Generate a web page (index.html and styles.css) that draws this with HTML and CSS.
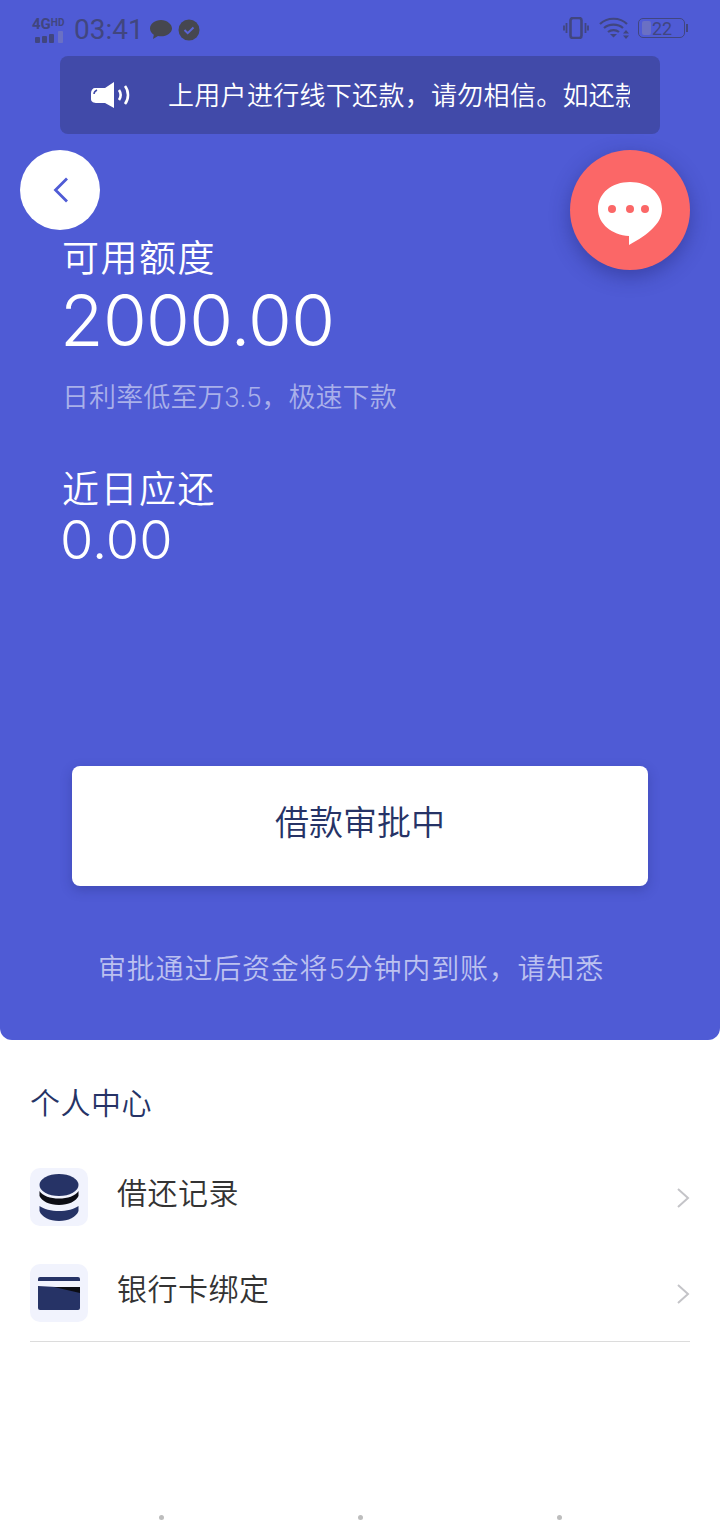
FILE: index.html
```html
<!DOCTYPE html>
<html lang="zh-CN">
<head>
  <meta charset="UTF-8" />
  <title>个人中心</title>
  <link rel="stylesheet" href="styles.css">
</head>
<body>
  <div class="hero">
    <div class="status-bar">
      <div class="status-left">
        <div class="signal">
          <span class="signal-text">4G<sup>HD</sup></span>
          <svg width="32" height="12" viewBox="0 0 32 12">
            <rect x="3" y="6" width="5" height="6" rx="1" fill="#41467f"/>
            <rect x="10" y="5" width="5" height="7" rx="1" fill="#41467f"/>
            <rect x="17" y="3" width="5" height="9" rx="1" fill="#41467f"/>
            <rect x="26" y="0" width="5" height="12" rx="1" fill="#6a70c4"/>
          </svg>
        </div>
        <span class="clock">03:41</span>
        <svg class="st-icon" width="22" height="20" viewBox="0 0 22 20">
          <path d="M11 0C5 0 0 3.700 0 8.500c0 2.600 1.500 4.800 3.800 6.300L3 19l5-3c1 .2 2 .3 3 .3 6 0 11-3.500 11-7.800S17 0 11 0z" fill="#46474f"/>
        </svg>
        <svg class="st-icon" width="22" height="22" viewBox="0 0 22 22">
          <circle cx="11" cy="11" r="10.500" fill="#46474f"/>
          <path d="M6.500 11l3.200 3.200 5.800-5.700" fill="none" stroke="#5a64d6" stroke-width="2"/>
        </svg>
      </div>
      <div class="status-right">
        <svg width="26" height="22" viewBox="0 0 26 22">
          <rect x="7.500" y="1" width="11" height="20" rx="2.500" fill="none" stroke="#41467f" stroke-width="2.600"/>
          <path d="M3.500 6v10M1 8.500v5M22.500 6v10M25 8.500v5" stroke="#41467f" stroke-width="1.800" fill="none"/>
        </svg>
        <svg width="32" height="22" viewBox="0 0 32 22">
          <path d="M1 7c7-7 20-7 27 0M5 11c5-4.500 14-4.500 19 0M9 15c3-2.500 8-2.500 11 0" fill="none" stroke="#41467f" stroke-width="2.200"/>
          <path d="M11 17h7l-3.500 3.500zM27 13l3 3.500h-6zM27 22l-3-3.500h6z" fill="#41467f"/>
        </svg>
        <div class="battery">
          <span class="battery-level"></span>
          <span class="battery-num">22</span>
        </div>
        <span class="battery-tip"></span>
      </div>
    </div>

    <div class="notice">
      <svg class="notice-icon" width="42" height="28" viewBox="0 0 42 28">
        <path d="M1 12c0-3 2-5 4-5h10L24 1v26l-9-5H7c-3 0-6-1-6-4z" fill="#fff"/>
        <path d="M4 13c0-2 1-3 3-4" fill="none" stroke="#414aa9" stroke-width="1.500"/>
        <path d="M29 9c2 3 2 7 0 10M35 5c4 5 4 13 0 18" fill="none" stroke="#fff" stroke-width="2.600"/>
      </svg>
      <div class="notice-track">
        <span class="notice-text">上用户进行线下还款，请勿相信。如还款</span>
      </div>
    </div>

    <button class="back-btn">
      <svg width="16" height="26" viewBox="0 0 16 26">
        <path d="M14 1.500L2.500 13 14 24.500" fill="none" stroke="#4f5bd5" stroke-width="2.800"/>
      </svg>
    </button>

    <div class="chat-btn">
      <svg width="66" height="64" viewBox="0 0 66 64">
        <path d="M33 0C15 0 1 11 1 27c0 15 14 26 31 27v9c9-5 19-11 25-18 5-5 8-11 8-18C65 11 51 0 33 0z" fill="#fff"/>
        <circle cx="15" cy="27" r="4" fill="#fb6767"/>
        <circle cx="33" cy="27" r="4" fill="#fb6767"/>
        <circle cx="48" cy="27" r="4" fill="#fb6767"/>
      </svg>
    </div>

    <div class="balance">
      <div class="label">可用额度</div>
      <div class="amount">2000.00</div>
      <div class="rate">日利率低至万3.5，极速下款</div>
      <div class="label label-due">近日应还</div>
      <div class="amount-small">0.00</div>
    </div>

    <div class="apply-btn">借款审批中</div>
    <div class="apply-tip">审批通过后资金将5分钟内到账，请知悉</div>
  </div>

  <div class="center">
    <div class="center-title">个人中心</div>
    <div class="menu-row">
      <div class="menu-icon">
        <svg width="40" height="47" viewBox="0 0 40 47">
          <ellipse cx="20" cy="11" rx="19.500" ry="11" fill="#263366"/>
          <path d="M.5 17c3 5 11 7.500 19.500 7.500S36.500 22 39.500 17v5c-2 5-10 9-19.500 9S2.500 27 .5 22z" fill="#0c0d14"/>
          <path d="M.5 32c4 3 12 5 19.500 5s15.500-2 19.500-5v5c-2 6-10 10-19.500 10S2.500 43 .5 37z" fill="#263366"/>
        </svg>
      </div>
      <span class="menu-name">借还记录</span>
      <svg class="arrow" width="14" height="20" viewBox="0 0 14 20">
        <path d="M2 1L12 10 2 19" fill="none" stroke="#c4c4c8" stroke-width="2"/>
      </svg>
    </div>
    <div class="menu-row">
      <div class="menu-icon">
        <svg width="42" height="33" viewBox="0 0 42 33">
          <rect x="0" y="0" width="42" height="33" rx="2" fill="#263366"/>
          <path d="M0 4h42v6H18L0 9z" fill="#f1f3fd"/>
          <path d="M16 10l26 0v6z" fill="#0c0d14"/>
        </svg>
      </div>
      <span class="menu-name">银行卡绑定</span>
      <svg class="arrow" width="14" height="20" viewBox="0 0 14 20">
        <path d="M2 1L12 10 2 19" fill="none" stroke="#c4c4c8" stroke-width="2"/>
      </svg>
    </div>
    <div class="divider"></div>
  </div>

  <div class="nav-dots">
    <span></span>
    <span></span>
    <span></span>
  </div>
</body>
</html>
```

FILE: styles.css
```css
* {
  box-sizing: border-box;
}

body {
  margin: 0;
  width: 720px;
  height: 1520px;
  overflow: hidden;
  position: relative;
  background: #fff;
  font-family: Roboto, "Noto Sans CJK SC", sans-serif;
}

.hero {
  position: relative;
  height: 1040px;
  background: #4f5bd5;
  border-radius: 0 0 12px 12px;
  color: #fff;
}

.status-bar {
  height: 56px;
  padding: 15px 32px 0 32px;
  display: flex;
  justify-content: space-between;
  align-items: flex-start;
}

.status-left,
.status-right {
  display: flex;
  align-items: center;
}

.signal {
  width: 34px;
  display: flex;
  flex-direction: column;
  gap: 1px;
}

.signal-text {
  font-size: 15px;
  line-height: 12px;
  font-weight: 700;
  color: #41467f;
  white-space: nowrap;
}

.signal-text sup {
  font-size: 10px;
  line-height: 0;
  vertical-align: 3px;
}

.clock {
  margin-left: 8px;
  font-size: 28px;
  line-height: 30px;
  color: #41467f;
}

.st-icon {
  margin-left: 6px;
}

.status-right {
  gap: 7px;
  margin-top: 2px;
}

.status-right svg:first-child {
  margin-right: 3px;
}

.battery {
  position: relative;
  width: 47px;
  height: 20px;
  border: 1.5px solid #41467f;
  border-radius: 5px;
  padding-left: 3px;
  display: flex;
  align-items: center;
}

.battery-level {
  width: 9px;
  height: 14px;
  background: #6a70c4;
  border-radius: 2px;
}

.battery-num {
  margin-left: 1px;
  font-size: 18px;
  color: #41467f;
}

.battery-tip {
  width: 2px;
  height: 8px;
  margin-left: -6px;
  background: #41467f;
}

.notice {
  width: 600px;
  height: 78px;
  margin-left: 60px;
  padding-left: 30px;
  background: #414aa9;
  border-radius: 8px;
  display: flex;
  align-items: center;
}

.notice-icon {
  flex: none;
}

.notice-track {
  width: 462px;
  margin: 0 0 4px 36px;
  overflow: hidden;
}

.notice-text {
  font-size: 26px;
  font-weight: 350;
  letter-spacing: 0.300px;
  white-space: nowrap;
}

.back-btn {
  position: absolute;
  left: 20px;
  top: 150px;
  width: 80px;
  height: 80px;
  border: none;
  border-radius: 50%;
  background: #fff;
  display: flex;
  align-items: center;
  justify-content: center;
  padding: 0 0 0 2px;
}

.chat-btn {
  position: absolute;
  left: 570px;
  top: 150px;
  width: 120px;
  height: 120px;
  border-radius: 50%;
  background: #fb6767;
  box-shadow: 0 6px 20px rgba(30, 35, 110, 0.45);
  display: flex;
  align-items: center;
  justify-content: center;
  padding-top: 8px;
}

.balance {
  padding: 102px 0 0 62px;
}

.label {
  font-size: 37px;
  line-height: 48px;
  font-weight: 350;
  letter-spacing: 1.500px;
}

.amount {
  font-family: Inter, Roboto, sans-serif;
  font-size: 71px;
  line-height: 72px;
  font-weight: 300;
  letter-spacing: -0.700px;
  margin-left: -2px;
}

.rate {
  margin-top: 22px;
  font-size: 27px;
  line-height: 40px;
  font-weight: 350;
  letter-spacing: 0.100px;
  color: #a9b0ea;
}

.label-due {
  margin-top: 49px;
}

.amount-small {
  font-family: Inter, Roboto, sans-serif;
  font-size: 54px;
  line-height: 50px;
  font-weight: 300;
  margin-left: -2px;
}

.apply-btn {
  width: 576px;
  height: 120px;
  margin: 201px 0 0 72px;
  padding-bottom: 12px;
  background: #fff;
  border-radius: 8px;
  box-shadow: 0 4px 12px rgba(30, 35, 110, 0.3);
  color: #263366;
  font-size: 34px;
  font-weight: 350;
  display: flex;
  align-items: center;
  justify-content: center;
}

.apply-tip {
  margin-top: 64px;
  padding-left: 98px;
  font-size: 28px;
  line-height: 40px;
  font-weight: 350;
  letter-spacing: 0.800px;
  color: #bcc1f0;
}

.center {
  padding: 44px 30px 0;
}

.center-title {
  font-size: 30px;
  line-height: 40px;
  font-weight: 350;
  letter-spacing: 0.500px;
  color: #263366;
}

.menu-row {
  height: 58px;
  margin-top: 38px;
  display: flex;
  align-items: center;
}

.center-title + .menu-row {
  margin-top: 44px;
}

.menu-icon {
  width: 58px;
  height: 58px;
  background: #f1f3fd;
  border-radius: 10px;
  display: flex;
  align-items: center;
  justify-content: center;
}

.menu-name {
  margin: 0 0 12px 29px;
  font-size: 30px;
  font-weight: 350;
  letter-spacing: 0.500px;
  color: #333;
  flex: 1;
}

.arrow {
  margin: 2px 0 0 0;
}

.divider {
  height: 1px;
  margin-top: 19px;
  background: #dcdcdc;
}

.nav-dots {
  position: absolute;
  left: 158.500px;
  bottom: 0;
  width: 403px;
  height: 5px;
  display: flex;
  justify-content: space-between;
}

.nav-dots span {
  width: 5px;
  height: 5px;
  border-radius: 50%;
  background: #bdbdbd;
}
```
